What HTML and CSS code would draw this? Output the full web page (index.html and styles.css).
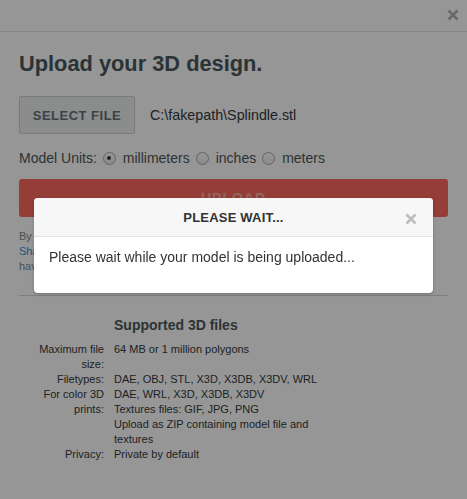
FILE: index.html
```html
<!DOCTYPE html>
<html lang="en">
<head>
<meta charset="utf-8">
<title>Upload your 3D design</title>
<link rel="stylesheet" href="styles.css">
</head>
<body>
<div class="page">
  <header class="topbar">
    <svg class="close-icon" width="12" height="12" viewBox="0 0 12 12" aria-label="Close"><path d="M1.5 1.5 L10.5 10.5 M10.5 1.5 L1.5 10.5" /></svg>
  </header>
  <main class="content">
    <h1 class="title">Upload your 3D design.</h1>
    <div class="file-row">
      <button class="select-btn" type="button">SELECT FILE</button>
      <span class="file-name">C:\fakepath\Splindle.stl</span>
    </div>
    <div class="units">
      <span class="units-label">Model Units:</span>
      <label class="opt"><input type="radio" name="u" checked><span>millimeters</span></label>
      <label class="opt"><input type="radio" name="u"><span>inches</span></label>
      <label class="opt"><input type="radio" name="u"><span>meters</span></label>
    </div>
    <button class="upload-btn" type="button">UPLOAD</button>
    <p class="terms">By uploading this file you agree to our terms of use and<br><a href="#">Shapeways Terms and Conditions</a> and confirm that you<br>have the rights to upload this content.</p>
    <hr class="divider">
    <section class="supported">
      <h2 class="supported-title">Supported 3D files</h2>
      <div class="spec">
        <div class="k">Maximum file size:</div>
        <div class="v">64 MB or 1 million polygons</div>
        <div class="k">Filetypes:</div>
        <div class="v">DAE, OBJ, STL, X3D, X3DB, X3DV, WRL</div>
        <div class="k">For color 3D prints:</div>
        <div class="v">DAE, WRL, X3D, X3DB, X3DV<br>Textures files: GIF, JPG, PNG<br>Upload as ZIP containing model file and textures</div>
        <div class="k">Privacy:</div>
        <div class="v">Private by default</div>
      </div>
    </section>
  </main>
</div>
<div class="overlay"></div>
<div class="modal" role="dialog">
  <div class="modal-head">
    <span class="modal-title">PLEASE WAIT...</span>
    <svg class="modal-close" width="12" height="12" viewBox="0 0 12 12" aria-label="Close"><path d="M1.5 1.5 L10.5 10.5 M10.5 1.5 L1.5 10.5" /></svg>
  </div>
  <div class="modal-body">Please wait while your model is being uploaded...</div>
</div>
</body>
</html>
```

FILE: styles.css
```css
* { box-sizing: border-box; }
html, body { margin: 0; padding: 0; }
body {
  font-family: "Liberation Sans", Arial, sans-serif;
  color: #4d575b;
  background: #ffffff;
  width: 467px;
  height: 499px;
  overflow: hidden;
}
.page { width: 467px; }
.topbar {
  height: 32px;
  border-bottom: 1px solid #e3e3e3;
  display: flex;
  justify-content: flex-end;
  align-items: flex-start;
  padding: 9px 8px 0 0;
}
.close-icon path { stroke: #b2b2b2; stroke-width: 2.6; fill: none; }
.content { padding: 0 19px; }
.title {
  margin: 20px 0 0;
  font-size: 21.8px;
  line-height: 24px;
  font-weight: bold;
  color: #48575c;
}
.file-row {
  margin-top: 20px;
  display: flex;
  align-items: center;
  gap: 15px;
}
.select-btn {
  width: 116px;
  height: 38px;
  border: 1px solid #cdd0d1;
  border-radius: 2px;
  background: #eceeee;
  color: #677175;
  font-family: "Liberation Sans", Arial, sans-serif;
  font-weight: bold;
  font-size: 13px;
  letter-spacing: 0.5px;
  padding: 0;
}
.file-name { font-size: 14.3px; color: #333a3c; }
.units {
  margin-top: 14px;
  display: flex;
  align-items: center;
  height: 20px;
  font-size: 14px;
  color: #4d575b;
}
.units-label { margin-right: 6px; }
.opt { display: flex; align-items: center; margin-right: 6px; }
.opt input {
  appearance: none;
  -webkit-appearance: none;
  margin: 0 7px 0 0;
  width: 13px;
  height: 13px;
  border: 1px solid #a6a8a9;
  border-radius: 50%;
  background: linear-gradient(#ffffff, #ededed);
  position: relative;
}
.opt input:checked::after {
  content: "";
  position: absolute;
  left: 3.5px;
  top: 3.5px;
  width: 4px;
  height: 4px;
  border-radius: 50%;
  background: #3a3f41;
}
.upload-btn {
  display: block;
  margin-top: 11px;
  width: 429px;
  height: 38px;
  border: 0;
  border-radius: 3px;
  background: #fe6a5e;
  color: rgba(255,255,255,0.45);
  font-family: "Liberation Sans", Arial, sans-serif;
  font-weight: bold;
  font-size: 14px;
  letter-spacing: 1px;
  padding: 0;
}
.terms {
  margin: 12px 0 0;
  font-size: 11px;
  line-height: 15px;
  color: #7f878a;
}
.terms a { color: #2d93dc; text-decoration: none; }
.divider {
  margin: 21px 0 0;
  border: 0;
  border-top: 1px solid #d9d9d9;
  height: 0;
}
.supported { margin-top: 20px; }
.supported-title {
  margin: 0 0 0 95px;
  font-size: 14px;
  line-height: 18px;
  font-weight: bold;
  color: #4d575b;
}
.spec {
  margin: 8px 0 0 15px;
  display: grid;
  grid-template-columns: 70px 205px;
  column-gap: 10px;
  font-size: 11px;
  line-height: 15px;
  color: #333a3c;
}
.k { text-align: right; }
.overlay {
  position: fixed;
  inset: 0;
  background: rgba(0,0,0,0.41);
}
.modal {
  position: absolute;
  left: 34px;
  top: 198px;
  width: 399px;
  height: 95px;
  background: #ffffff;
  border-radius: 4px;
  box-shadow: 0 1px 3px rgba(0,0,0,0.25);
  overflow: hidden;
}
.modal-head {
  height: 39px;
  background: #f7f7f7;
  border-bottom: 1px solid #e2e2e2;
  display: flex;
  align-items: center;
  justify-content: center;
  position: relative;
}
.modal-title {
  font-size: 13px;
  font-weight: bold;
  color: #333333;
  letter-spacing: 0.2px;
}
.modal-close {
  position: absolute;
  right: 16px;
  top: 15px;
}
.modal-close path { stroke: #bdbdbd; stroke-width: 2.6; fill: none; }
.modal-body {
  padding: 11px 15px 9px;
  font-size: 14px;
  line-height: 18px;
  color: #333333;
}
```
